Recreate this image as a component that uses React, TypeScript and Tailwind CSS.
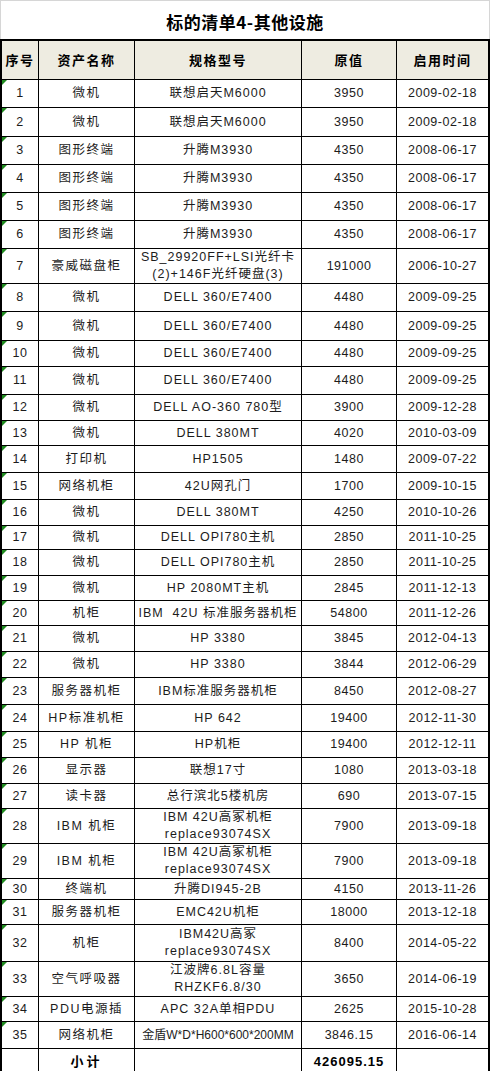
type Row = {
  no: string;
  name: string;
  spec: string[];
  value: string;
  date: string;
  h: string;
  tight?: boolean;
};

const rows: Row[] = [
  { no: "1", name: "微机", spec: ["联想启天M6000"], value: "3950", date: "2009-02-18", h: "h-[28px]" },
  { no: "2", name: "微机", spec: ["联想启天M6000"], value: "3950", date: "2009-02-18", h: "h-[29px]" },
  { no: "3", name: "图形终端", spec: ["升腾M3930"], value: "4350", date: "2008-06-17", h: "h-[28px]" },
  { no: "4", name: "图形终端", spec: ["升腾M3930"], value: "4350", date: "2008-06-17", h: "h-[28px]" },
  { no: "5", name: "图形终端", spec: ["升腾M3930"], value: "4350", date: "2008-06-17", h: "h-[28px]" },
  { no: "6", name: "图形终端", spec: ["升腾M3930"], value: "4350", date: "2008-06-17", h: "h-[28px]" },
  { no: "7", name: "豪威磁盘柜", spec: ["SB_29920FF+LSI光纤卡", "(2)+146F光纤硬盘(3)"], value: "191000", date: "2006-10-27", h: "h-[32px]" },
  { no: "8", name: "微机", spec: ["DELL 360/E7400"], value: "4480", date: "2009-09-25", h: "h-[28px]" },
  { no: "9", name: "微机", spec: ["DELL 360/E7400"], value: "4480", date: "2009-09-25", h: "h-[29px]" },
  { no: "10", name: "微机", spec: ["DELL 360/E7400"], value: "4480", date: "2009-09-25", h: "h-[26px]" },
  { no: "11", name: "微机", spec: ["DELL 360/E7400"], value: "4480", date: "2009-09-25", h: "h-[28px]" },
  { no: "12", name: "微机", spec: ["DELL AO-360 780型"], value: "3900", date: "2009-12-28", h: "h-[26px]" },
  { no: "13", name: "微机", spec: ["DELL 380MT"], value: "4020", date: "2010-03-09", h: "h-[25px]" },
  { no: "14", name: "打印机", spec: ["HP1505"], value: "1480", date: "2009-07-22", h: "h-[27px]" },
  { no: "15", name: "网络机柜", spec: ["42U网孔门"], value: "1700", date: "2009-10-15", h: "h-[27px]" },
  { no: "16", name: "微机", spec: ["DELL 380MT"], value: "4250", date: "2010-10-26", h: "h-[26px]" },
  { no: "17", name: "微机", spec: ["DELL OPI780主机"], value: "2850", date: "2011-10-25", h: "h-[24px]" },
  { no: "18", name: "微机", spec: ["DELL OPI780主机"], value: "2850", date: "2011-10-25", h: "h-[26px]" },
  { no: "19", name: "微机", spec: ["HP 2080MT主机"], value: "2845", date: "2011-12-13", h: "h-[25px]" },
  { no: "20", name: "机柜", spec: ["IBM  42U 标准服务器机柜"], value: "54800", date: "2011-12-26", h: "h-[25px]" },
  { no: "21", name: "微机", spec: ["HP 3380"], value: "3845", date: "2012-04-13", h: "h-[26px]" },
  { no: "22", name: "微机", spec: ["HP 3380"], value: "3844", date: "2012-06-29", h: "h-[26px]" },
  { no: "23", name: "服务器机柜", spec: ["IBM标准服务器机柜"], value: "8450", date: "2012-08-27", h: "h-[27px]" },
  { no: "24", name: "HP标准机柜", spec: ["HP 642"], value: "19400", date: "2012-11-30", h: "h-[27px]" },
  { no: "25", name: "HP 机柜", spec: ["HP机柜"], value: "19400", date: "2012-12-11", h: "h-[26px]" },
  { no: "26", name: "显示器", spec: ["联想17寸"], value: "1080", date: "2013-03-18", h: "h-[26px]" },
  { no: "27", name: "读卡器", spec: ["总行滨北5楼机房"], value: "690", date: "2013-07-15", h: "h-[25px]" },
  { no: "28", name: "IBM 机柜", spec: ["IBM 42U高冢机柜", "replace93074SX"], value: "7900", date: "2013-09-18", h: "h-[35px]" },
  { no: "29", name: "IBM 机柜", spec: ["IBM 42U高冢机柜", "replace93074SX"], value: "7900", date: "2013-09-18", h: "h-[35px]" },
  { no: "30", name: "终端机", spec: ["升腾DI945-2B"], value: "4150", date: "2013-11-26", h: "h-[21px]" },
  { no: "31", name: "服务器机柜", spec: ["EMC42U机柜"], value: "18000", date: "2013-12-18", h: "h-[25px]" },
  { no: "32", name: "机柜", spec: ["IBM42U高冢", "replace93074SX"], value: "8400", date: "2014-05-22", h: "h-[37px]" },
  { no: "33", name: "空气呼吸器", spec: ["江波牌6.8L容量", "RHZKF6.8/30"], value: "3650", date: "2014-06-19", h: "h-[33px]" },
  { no: "34", name: "PDU电源插", spec: ["APC 32A单相PDU"], value: "2625", date: "2015-10-28", h: "h-[25px]" },
  { no: "35", name: "网络机柜", spec: ["金盾W*D*H600*600*200MM"], value: "3846.15", date: "2016-06-14", h: "h-[27px]", tight: true },
];

const cell = "border-b border-r border-black p-0 text-center align-middle";
const lastCell = "border-b border-black p-0 text-center align-middle";

export default function App() {
  return (
    <div className="w-[491px] bg-white font-['Liberation_Sans','Noto_Sans_CJK_SC',sans-serif] text-[#1c1c1c]">
      <div className="flex h-[39px] w-[490px] items-center justify-center border-x border-t border-[#d6d6d6] pt-[3px]">
        <h1 className="font-['Noto_Sans_CJK_SC',sans-serif] text-[17px] font-bold leading-none tracking-[0.5px] text-black">
          标的清单4-其他设施
        </h1>
      </div>

      <div className="w-[490px] border-2 border-black">
        <table className="w-[486px] table-fixed border-separate border-spacing-0 text-[12.5px] leading-[17px] tracking-[0.5px]">
          <colgroup>
            <col className="w-[37px]" />
            <col className="w-[96px]" />
            <col className="w-[167px]" />
            <col className="w-[95px]" />
            <col className="w-[91px]" />
          </colgroup>
          <thead>
            <tr className="h-[39px] bg-[#eeece1] text-[13px] font-bold tracking-[1.5px] text-black">
              <th className={cell}>序号</th>
              <th className={cell}>资产名称</th>
              <th className={cell}>规格型号</th>
              <th className={cell}>原值</th>
              <th className={lastCell}>启用时间</th>
            </tr>
          </thead>
          <tbody>
            {rows.map((r) => (
              <tr key={r.no} className={r.h}>
                <td className={`${cell} relative`}>
                  <span className="absolute left-0 top-0 h-0 w-0 border-r-[5px] border-t-[5px] border-r-transparent border-t-[#1f8a1f]" />
                  {r.no}
                </td>
                <td className={`${cell} tracking-[1.5px]`}>{r.name}</td>
                <td className={r.tight ? `${cell} text-[12px] tracking-[0px]` : `${cell} tracking-[1px]`}>
                  {r.spec.map((line) => (
                    <div key={line} className="whitespace-pre">
                      {line}
                    </div>
                  ))}
                </td>
                <td className={cell}>{r.value}</td>
                <td className={lastCell}>{r.date}</td>
              </tr>
            ))}
            <tr className="h-[25px] text-[13px] font-bold text-black">
              <td className="border-r border-black p-0" />
              <td className="border-r border-black p-0 text-center tracking-[3px]">小计</td>
              <td className="border-r border-black p-0" />
              <td className="border-r border-black p-0 text-center tracking-[1px]">426095.15</td>
              <td className="p-0" />
            </tr>
          </tbody>
        </table>
      </div>
    </div>
  );
}
